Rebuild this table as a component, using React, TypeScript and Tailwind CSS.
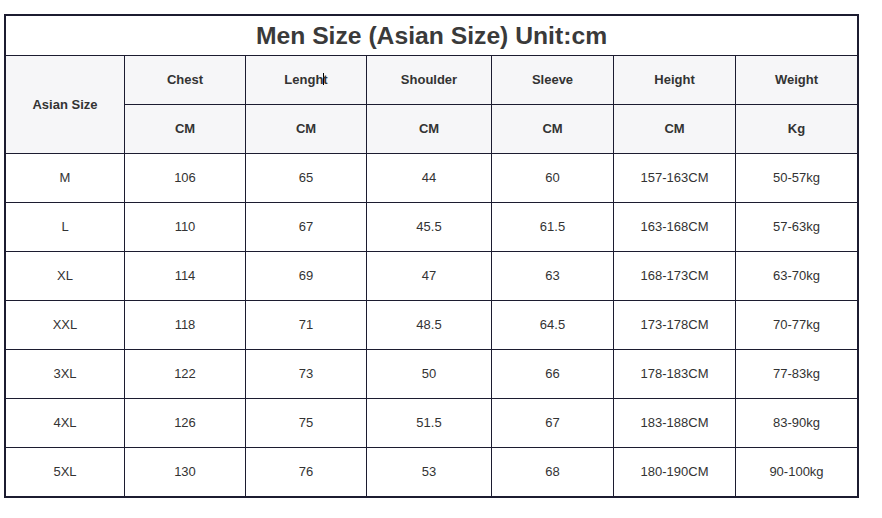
import React from "react";

const rows = [
  ["M", "106", "65", "44", "60", "157-163CM", "50-57kg"],
  ["L", "110", "67", "45.5", "61.5", "163-168CM", "57-63kg"],
  ["XL", "114", "69", "47", "63", "168-173CM", "63-70kg"],
  ["XXL", "118", "71", "48.5", "64.5", "173-178CM", "70-77kg"],
  ["3XL", "122", "73", "50", "66", "178-183CM", "77-83kg"],
  ["4XL", "126", "75", "51.5", "67", "183-188CM", "83-90kg"],
  ["5XL", "130", "76", "53", "68", "180-190CM", "90-100kg"],
];

export default function App() {
  const hcell = "bg-[#f6f6f8] flex items-center justify-center text-[13px] font-bold text-[#333]";
  const cell = "bg-white flex items-center justify-center text-[13px] text-[#333]";
  return (
    <div
      className="w-[882px] h-[518px] bg-white pt-[14px] pl-[4px]"
      style={{ fontFamily: '"Liberation Sans", Arial, sans-serif' }}
    >
      <div className="w-[855px] border-2 border-[#1c1c30] bg-[#1c1c30]">
        <div className="h-[39px] bg-white flex items-center justify-center text-[24.7px] font-bold text-[#3a3a3a] mb-px">
          Men Size (Asian Size) Unit:cm
        </div>
        <div className="grid grid-cols-[118px_120px_120px_124px_121px_121px_121px] auto-rows-[48px] gap-px">
          <div className={`${hcell} row-span-2`}>Asian Size</div>
          <div className={hcell}>Chest</div>
          <div className={hcell}>
            <span>
              Lengh
              <span className="inline-block w-px h-[12px] bg-black align-[-1px] mx-[-0.5px]" />
              t
            </span>
          </div>
          <div className={hcell}>Shoulder</div>
          <div className={hcell}>Sleeve</div>
          <div className={hcell}>Height</div>
          <div className={hcell}>Weight</div>
          <div className={hcell}>CM</div>
          <div className={hcell}>CM</div>
          <div className={hcell}>CM</div>
          <div className={hcell}>CM</div>
          <div className={hcell}>CM</div>
          <div className={hcell}>Kg</div>
          {rows.map((r, i) =>
            r.map((v, j) => (
              <div key={`${i}-${j}`} className={cell}>
                {v}
              </div>
            ))
          )}
        </div>
      </div>
    </div>
  );
}
